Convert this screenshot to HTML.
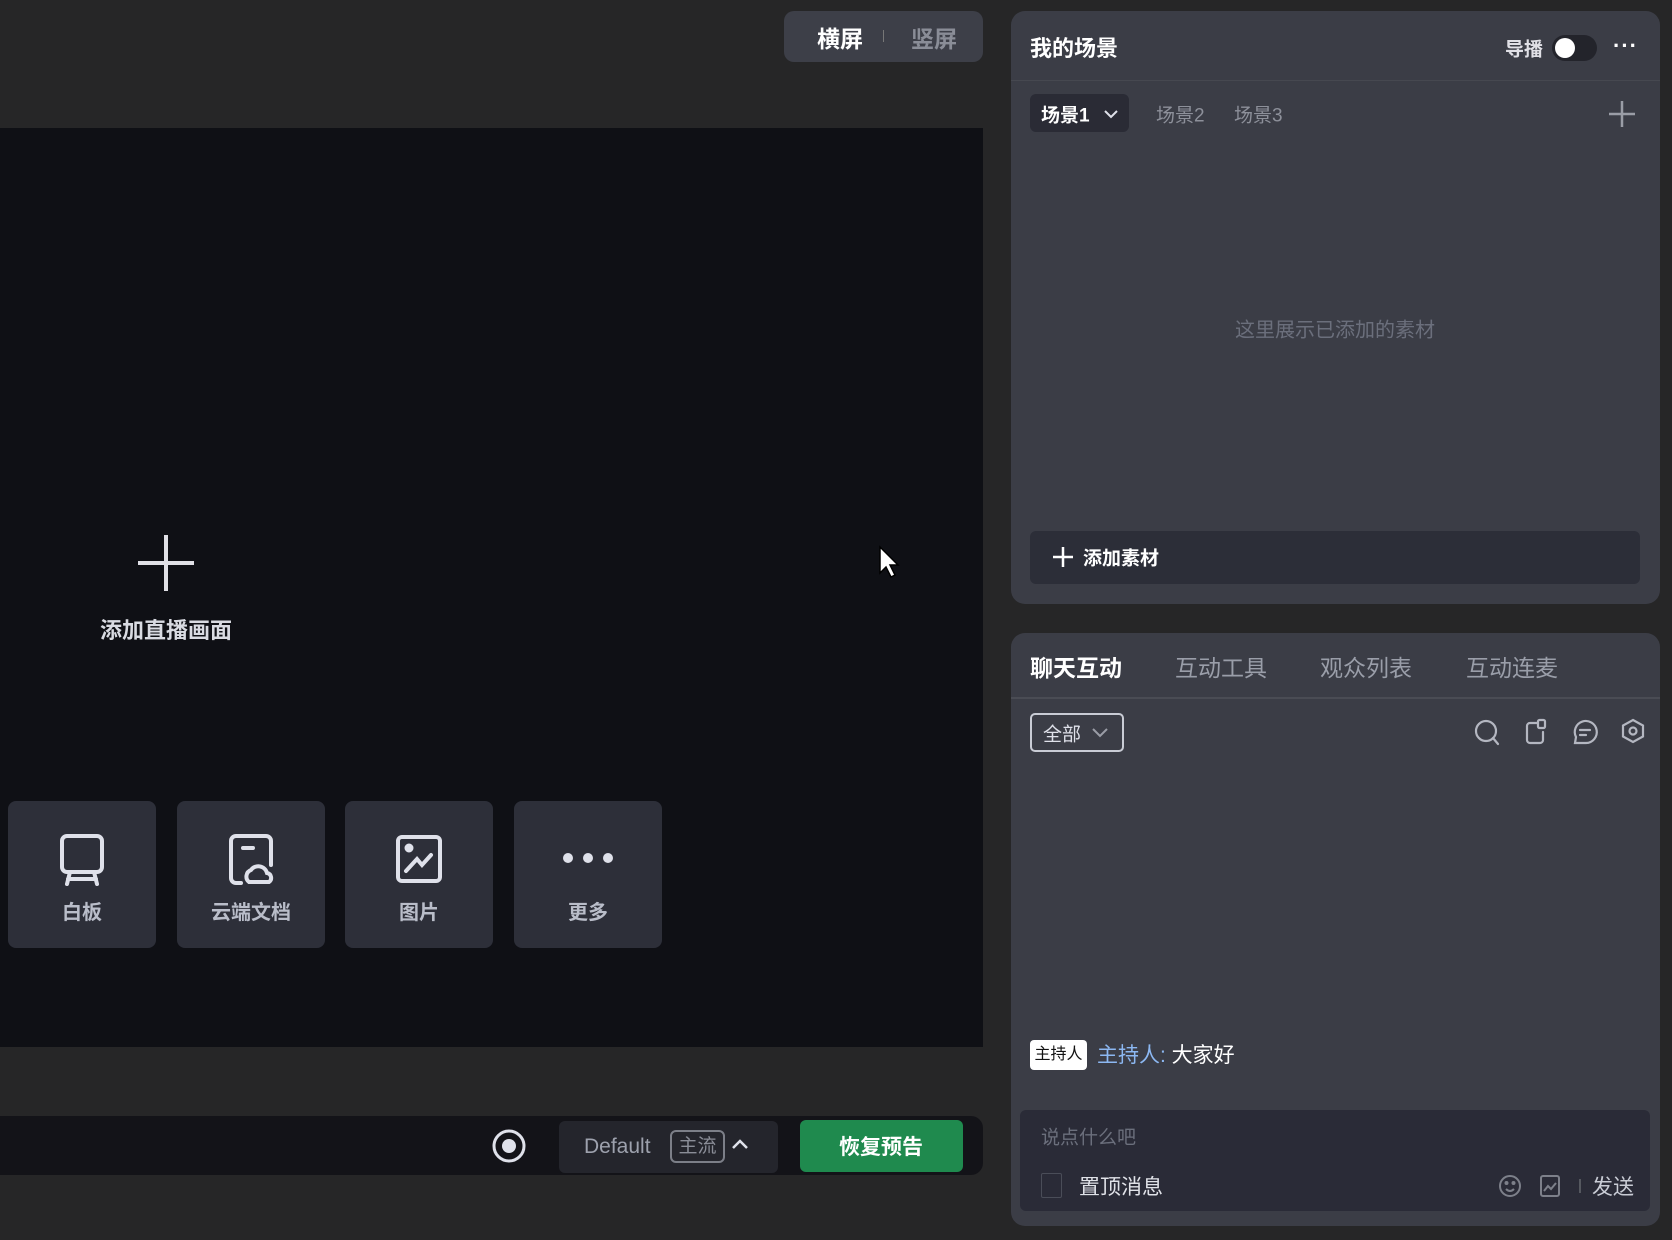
<!DOCTYPE html>
<html><head><meta charset="utf-8"><style>
*{margin:0;padding:0;box-sizing:border-box}
body{width:1672px;height:1240px;background:#262627;position:relative;overflow:hidden;font-family:"Liberation Sans","Noto Sans CJK SC",sans-serif;color:#e8e8ec}
.a{position:absolute}
.c{position:absolute;transform:translate(-50%,-50%);white-space:nowrap}
.l{position:absolute;transform:translateY(-50%);white-space:nowrap}
.tile{position:absolute;top:801px;width:148px;height:147px;background:#2d2f39;border-radius:8px}
.tile svg{position:absolute;left:50%;top:33px;transform:translateX(-50%)}
.tile span{position:absolute;left:0;right:0;top:95px;text-align:center;font-size:20px;color:#b9bdc9;font-weight:bold}
.panel{position:absolute;left:1011px;width:649px;background:#3b3d46;border-radius:14px}
</style></head><body>
<div class="a" style="left:784px;top:11px;width:199px;height:51px;background:#3d3f48;border-radius:10px"></div>
<div class="c" style="left:840px;top:37px;font-size:23px;font-weight:bold;color:#fff">横屏</div>
<div class="a" style="left:883px;top:30px;width:1px;height:12px;background:#777"></div>
<div class="c" style="left:934px;top:37px;font-size:23px;font-weight:bold;color:#8a8d97">竖屏</div>

<div class="a" style="left:0;top:128px;width:983px;height:919px;background:#0f1015"></div>
<svg class="a" style="left:136px;top:533px" width="60" height="60"><path d="M30 2V58M2 30H58" stroke="#e0e0e6" stroke-width="4"/></svg>
<div class="c" style="left:166px;top:629px;font-size:22px;font-weight:bold;color:#d9dbe2">添加直播画面</div>

<div class="tile" style="left:8px"><svg width="48" height="52" viewBox="0 0 48 52" fill="none" stroke="#dfe1ea" stroke-width="4" stroke-linecap="round"><rect x="4" y="2" width="40" height="36" rx="5"/><path d="M12 38L9 50M36 38L39 50M10 45H38"/></svg><span>白板</span></div>
<div class="tile" style="left:177px"><svg width="48" height="52" viewBox="0 0 48 52" fill="none" stroke="#dfe1ea" stroke-width="4" stroke-linecap="round"><path d="M14 49H9a5 5 0 0 1-5-5V7a5 5 0 0 1 5-5h30a5 5 0 0 1 5 5v24"/><path d="M16 14H26"/><path d="M22 48a7 7 0 0 1 2-12a9 9 0 0 1 16 3a5 5 0 0 1 2 9Z"/></svg><span>云端文档</span></div>
<div class="tile" style="left:345px"><svg width="48" height="52" viewBox="0 0 48 52" fill="none" stroke="#dfe1ea" stroke-width="4" stroke-linecap="round"><rect x="3" y="3" width="42" height="44" rx="4"/><circle cx="14" cy="14" r="2.5" fill="#dfe1ea"/><path d="M11 37L22 25L27 31L36 21"/></svg><span>图片</span></div>
<div class="tile" style="left:514px"><svg width="60" height="52" viewBox="0 0 60 52"><circle cx="10" cy="24" r="5" fill="#dfe1ea"/><circle cx="30" cy="24" r="5" fill="#dfe1ea"/><circle cx="50" cy="24" r="5" fill="#dfe1ea"/></svg><span>更多</span></div>

<svg class="a" style="left:878px;top:545px" width="24" height="34" viewBox="0 0 24 34"><path d="M2 2V28L8 22L13 32L17 30L12 20H20Z" fill="#fff" stroke="#000" stroke-width="1.5"/></svg>

<div class="a" style="left:0;top:1116px;width:983px;height:59px;background:#131318;border-radius:0 12px 12px 0"></div>
<svg class="a" style="left:491px;top:1128px" width="36" height="36"><circle cx="18" cy="18" r="15" fill="none" stroke="#dfe1ea" stroke-width="3"/><circle cx="18" cy="18" r="7" fill="#dfe1ea"/></svg>
<div class="a" style="left:559px;top:1121px;width:219px;height:52px;background:#24252c;border-radius:6px"></div>
<div class="l" style="left:584px;top:1147px;font-size:21px;color:#9da1ad">Default</div>
<div class="a" style="left:670px;top:1130px;width:55px;height:33px;border:2px solid #7c7f88;border-radius:6px;font-size:19px;color:#8a8d97;text-align:center;line-height:29px">主流</div>
<svg class="a" style="left:731px;top:1138px" width="18" height="12"><path d="M2 10L9 3L16 10" stroke="#dfe1ea" stroke-width="2.5" fill="none"/></svg>
<div class="a" style="left:800px;top:1120px;width:163px;height:52px;background:#1f8a4e;border-radius:6px"></div>
<div class="c" style="left:881px;top:1146px;font-size:21px;font-weight:bold;color:#fff">恢复预告</div>

<div class="panel" style="top:11px;height:593px">
 <div class="l" style="left:19px;top:36px;font-size:22px;font-weight:bold;color:#fff">我的场景</div>
 <div class="l" style="left:494px;top:37px;font-size:19px;font-weight:bold;color:#e0e0e6">导播</div>
 <div class="a" style="left:541px;top:24px;width:45px;height:26px;border-radius:13px;background:#23242b"></div>
 <div class="a" style="left:544px;top:27px;width:20px;height:20px;border-radius:10px;background:#fff"></div>
 <div class="l" style="left:602px;top:35px;font-size:22px;font-weight:bold;color:#fff;letter-spacing:1px">···</div>
 <div class="a" style="left:0;top:69px;width:649px;height:1px;background:#464850"></div>
 <div class="a" style="left:19px;top:83px;width:99px;height:38px;background:#2a2b35;border-radius:6px"></div>
 <div class="l" style="left:30px;top:103px;font-size:19px;font-weight:bold;color:#fff">场景1</div>
 <svg class="a" style="left:92px;top:97px" width="16" height="12"><path d="M2 3L8 9L14 3" stroke="#dfe1ea" stroke-width="2" fill="none"/></svg>
 <div class="l" style="left:145px;top:103px;font-size:19px;color:#8d909a">场景2</div>
 <div class="l" style="left:223px;top:103px;font-size:19px;color:#8d909a">场景3</div>
 <svg class="a" style="left:597px;top:89px" width="28" height="28"><path d="M14 1V27M1 14H27" stroke="#9a9da6" stroke-width="2.5"/></svg>
 <div class="c" style="left:324px;top:317px;font-size:20px;color:#6b6f7c">这里展示已添加的素材</div>
 <div class="a" style="left:19px;top:520px;width:610px;height:53px;background:#2c2e38;border-radius:6px"></div>
 <svg class="a" style="left:41px;top:535px" width="22" height="22"><path d="M11 1V21M1 11H21" stroke="#fff" stroke-width="2.5"/></svg>
 <div class="l" style="left:72px;top:546px;font-size:19px;font-weight:bold;color:#fff">添加素材</div>
</div>

<div class="panel" style="top:633px;height:593px">
 <div class="l" style="left:19px;top:33px;font-size:23px;font-weight:bold;color:#fff">聊天互动</div>
 <div class="l" style="left:164px;top:33px;font-size:23px;color:#9a9ea9">互动工具</div>
 <div class="l" style="left:309px;top:33px;font-size:23px;color:#9a9ea9">观众列表</div>
 <div class="l" style="left:455px;top:33px;font-size:23px;color:#9a9ea9">互动连麦</div>
 <div class="a" style="left:0;top:64px;width:649px;height:2px;background:#4a4c54"></div>
 <div class="a" style="left:19px;top:80px;width:94px;height:39px;border:2px solid #c9ccd5;border-radius:5px"></div>
 <div class="l" style="left:32px;top:100px;font-size:19px;color:#dfe1ea">全部</div>
 <svg class="a" style="left:80px;top:94px" width="18" height="12"><path d="M2 2L9 9L16 2" stroke="#9a9da6" stroke-width="2" fill="none"/></svg>
 <svg class="a" style="left:462px;top:84px" width="200" height="30" fill="none" stroke="#b4b7c1" stroke-width="2.2" stroke-linecap="round">
  <circle cx="13" cy="14" r="10"/><path d="M20 21L25 27"/>
  <path d="M65 6H57a3 3 0 0 0-3 3V23a3 3 0 0 0 3 3H67a3 3 0 0 0 3-3V15"/><rect x="65" y="3" width="7" height="8" rx="1.5"/>
  <path d="M113 26a11 11 0 1 0-10-6l-1 6Z"/><path d="M107 13H117M107 18H113"/>
  <path d="M160 3L170 8.5V19.5L160 25L150 19.5V8.5Z"/><circle cx="160" cy="14" r="3.5"/>
 </svg>
 <div class="a" style="left:19px;top:407px;width:57px;height:30px;background:#fff;border-radius:4px;font-size:16px;color:#111;text-align:center;line-height:30px">主持人</div>
 <div class="l" style="left:86px;top:421px;font-size:21px;color:#8cb8f2">主持人: <span style="color:#fff">大家好</span></div>
 <div class="a" style="left:9px;top:477px;width:630px;height:101px;background:#2a2b37;border-radius:6px"></div>
 <div class="l" style="left:30px;top:503px;font-size:19px;color:#6b6f7c">说点什么吧</div>
 <div class="a" style="left:30px;top:540px;width:21px;height:25px;border:1.5px solid #4a4d58;border-radius:2px"></div>
 <div class="l" style="left:68px;top:553px;font-size:21px;color:#e0e2e8">置顶消息</div>
 <svg class="a" style="left:487px;top:540px" width="90" height="26" fill="none" stroke="#7d808a" stroke-width="2">
  <circle cx="12" cy="13" r="10"/><circle cx="8.5" cy="10" r="1" fill="#7d808a"/><circle cx="15.5" cy="10" r="1" fill="#7d808a"/><path d="M8 16q4 4 8 0"/>
  <rect x="43" y="3" width="18" height="20" rx="2"/><path d="M46 18l4-5 3 3 5-6"/>
  <path d="M82 6V20" stroke="#55585f"/>
 </svg>
 <div class="l" style="left:581px;top:553px;font-size:21px;color:#c9ccd5">发送</div>
</div>
</body></html>
